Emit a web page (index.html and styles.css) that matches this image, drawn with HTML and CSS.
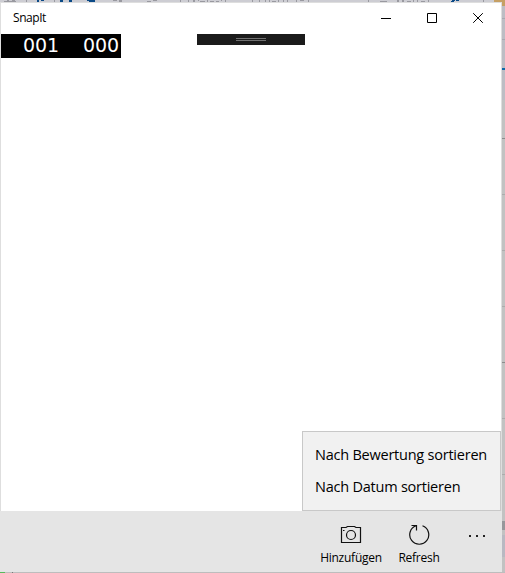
FILE: index.html
```html
<!DOCTYPE html>
<html lang="de">
<head>
<meta charset="utf-8">
<title>SnapIt</title>
<link rel="stylesheet" href="styles.css">
</head>
<body>
<div class="desktop">
  <svg class="backdrop" width="505" height="573" shape-rendering="crispEdges" aria-hidden="true">
    <rect width="505" height="2" fill="#cdcdd3"/>
    <rect x="502" width="3" height="100" fill="#bdbdc4"/>
    <rect x="502" y="100" width="3" height="473" fill="#c2c2c2"/>
    <rect x="494" width="11" height="6" fill="#c6a064"/>
    <path stroke="#a9a9b1" d="M502 18.5h3M502 39.5h3"/>
    <path stroke="#0e69a8" stroke-width="2" d="M502 69h3"/>
    <path stroke="#8c8c8c" d="M502 138.5h3M502 362.5h3"/>
    <path stroke="#acacac" d="M502 194.5h3M502 250.5h3M502 306.5h3M502 418.5h3M502 474.5h3"/>
    <rect x="502" y="521" width="3" height="9" fill="#97979b"/>
    <rect x="502" y="535" width="3" height="22" fill="#b9b9c2"/>
    <g fill="#0b4a87"><path d="M37 0h2v2h-2zM41 0h3v1h-3zM60 0h3v2h-3zM69 0h3v2h-3zM87 0h8v1h-8zM89 1h6v1h-6zM452 0h3v1h-3zM456 0h3v1h-3zM451 1h3v1h-3z"/></g>
    <g fill="#9999a0"><path d="M4 1h12v1H4zM7 0h2v1H7zM12 0h3v1h-3zM26 0h1v2h-1zM54 0h1v2h-1zM113 0h4v1h-4zM119 0h3v2h-3zM147 1h4v1h-4zM153 0h4v1h-4zM180 0h1v2h-1zM188 0h1v2h-1zM193 0h2v2h-2zM198 0h1v1h-1zM200 1h5v1h-5zM207 0h1v2h-1zM210 1h4v1h-4zM216 1h3v1h-3zM221 0h1v1h-1zM225 0h1v2h-1zM252 0h1v2h-1zM259 0h1v2h-1zM265 0h1v2h-1zM269 0h1v2h-1zM272 1h4v1h-4zM278 0h1v2h-1zM283 0h1v2h-1zM287 0h1v2h-1zM296 0h1v2h-1zM300 0h4v1h-4zM308 0h1v2h-1zM368 0h1v2h-1zM380 1h7v1h-7zM397 0h2v2h-2zM402 0h2v2h-2zM407 1h4v1h-4zM413 0h1v2h-1zM417 0h1v2h-1zM421 1h4v1h-4zM428 0h1v2h-1zM483 0h1v2h-1z"/></g>
    <rect y="572" width="505" height="1" fill="#bdbdbd"/>
    <rect y="572" width="5" height="1" fill="#58b95c"/>
    <rect x="12" y="572" width="1" height="1" fill="#777"/>
  </svg>
  <main class="window">
    <header class="titlebar">
      <span class="title">SnapIt</span>
      <div class="captions">
        <svg viewBox="0 0 10 10"><path d="M0 5.5h10"/></svg>
        <svg viewBox="0 0 10 10"><path d="M.5.5h9v9h-9z"/></svg>
        <svg class="close" viewBox="0 0 10 10"><path d="M.2.2l9.6 9.6M9.8.2L.2 9.8"/></svg>
      </div>
    </header>
    <section class="content">
      <div class="counter"><span>001</span><span>000</span></div>
      <div class="debug-handle"><i></i></div>
    </section>
    <footer class="appbar">
      <div class="command add">
        <svg width="22" height="22" viewBox="0 0 22 22"><path d="M1.5 3.5h4.5l1.5-1h7l1.5 1h4.5v15h-19z"/><circle cx="11" cy="11" r="4.5"/><path d="M3 6.5h1.5"/></svg>
        <span>Hinzufügen</span>
      </div>
      <div class="command refresh">
        <svg width="22" height="22" viewBox="0 0 22 22"><path d="M14.5 1.8A9.5 9.5 0 1 1 8 1.8M3.5 1.5h5v5"/></svg>
        <span>Refresh</span>
      </div>
      <div class="more"><i></i><i></i><i></i></div>
    </footer>
    <div class="menu">
      <div class="bewertung">Nach Bewertung sortieren</div>
      <div class="datum">Nach Datum sortieren</div>
    </div>
  </main>
</div>
</body>
</html>
```
FILE: styles.css
```css
* { box-sizing: border-box; }
body { margin: 0; overflow: hidden; font-family: "Open Sans", "Noto Sans", sans-serif; color: #000; }
.desktop { position: relative; width: 505px; height: 573px; padding-top: 2px; }
.backdrop { position: absolute; inset: 0; display: block; }
.window { position: relative; display: flex; flex-direction: column; width: 502px; height: 570px; background: #fff; border: 1px solid #dedede; border-bottom: 0; }
.titlebar { display: flex; justify-content: space-between; height: 31px; padding: 0 18px 0 12px; }
.title { font-size: 12px; line-height: 30px; letter-spacing: -.45px; }
.captions { display: flex; gap: 36px; padding-top: 10px; }
.captions svg { width: 10px; height: 10px; fill: none; stroke: #000; }
.content { display: grid; grid-template-columns: 196px 108px; flex: 1; align-items: start; }
.counter { display: flex; gap: 24px; width: 120px; height: 24px; padding-left: 22px; background: #000; color: #fff; font: 19px/23px "DejaVu Sans", sans-serif; letter-spacing: -.09px; }
.debug-handle { height: 11px; background: #1b1b1b; padding: 4px 0 0 39px; }
.debug-handle i { display: block; width: 30px; height: 3px; border: solid #707070; border-width: 1px 0; }
.appbar { display: flex; align-items: flex-start; height: 61px; margin: 0 -1px; padding-left: 317px; background: #e5e5e5; }
.command { display: flex; flex-direction: column; align-items: center; width: 68px; padding-top: 13px; font-size: 12px; line-height: 16px; white-space: nowrap; }
.command svg { fill: none; stroke: #111; stroke-width: 1.2; }
.command span { margin-top: 4px; letter-spacing: -.25px; }
.more { display: flex; gap: 5px; margin: 24px 0 0 16px; }
.more i { width: 2px; height: 2px; background: #222; }
.menu { position: absolute; right: 0; bottom: 61px; width: 199px; height: 80px; padding: 7px 0 0 12px; background: #f1f1f1; border: 1px solid #c8c8c8; font-size: 14.5px; line-height: 32px; letter-spacing: -.23px; white-space: nowrap; }
```
